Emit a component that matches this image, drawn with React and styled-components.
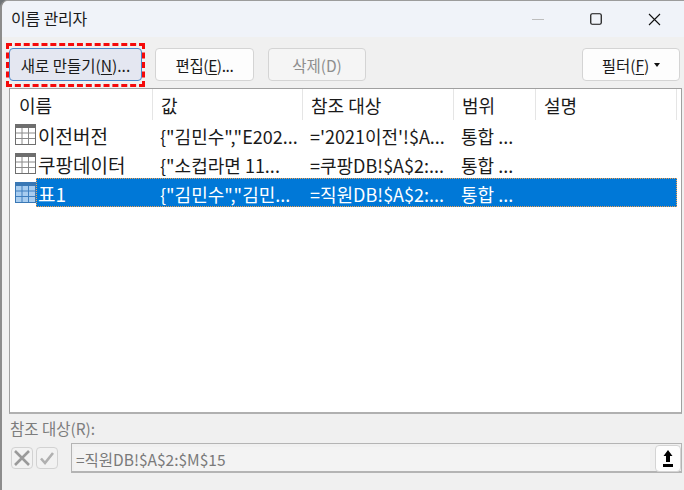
import React from 'react';
import styled, { createGlobalStyle } from 'styled-components';

const FONT = '"Noto Sans CJK KR", "Noto Sans", sans-serif';

const Global = createGlobalStyle`
  html, body { margin: 0; padding: 0; background: #6f7478; }
  #root { width: 684px; height: 490px; overflow: hidden; }
  * { box-sizing: border-box; }
`;

const Win = styled.div`
  width: 684px;
  height: 490px;
  display: flex;
  flex-direction: column;
  background: #f0f0f0;
  border-top: 1px solid #9c9c9c;
  border-left: 2px solid #8c8c8c;
  border-top-left-radius: 8px;
  font-family: ${FONT};
  color: #1a1a1a;
  overflow: hidden;
`;

const TitleBar = styled.div`
  height: 36px;
  flex: none;
  display: flex;
  align-items: center;
  background: #f0f3f9;
  padding-left: 9px;
  font-size: 16px;
  letter-spacing: -0.2px;
`;

const Title = styled.div`
  flex: 1;
  margin-top: -2px;
`;

const WinBtn = styled.div`
  width: 58.5px;
  height: 36px;
  display: flex;
  align-items: center;
  justify-content: center;
`;

const Toolbar = styled.div`
  height: 51px;
  flex: none;
  display: flex;
  align-items: flex-start;
  padding: 11px 2px 0 7px;
`;

const Button = styled.div`
  position: relative;
  width: ${(p) => p.$w}px;
  height: 33px;
  margin-left: ${(p) => p.$ml || 0}px;
  display: flex;
  align-items: center;
  justify-content: center;
  white-space: nowrap;
  font-size: 15.5px;
  letter-spacing: ${(p) => p.$ls || 0}px;
  background: ${(p) => (p.$primary ? '#e4e7f1' : p.$disabled ? '#f5f5f5' : '#fdfdfd')};
  color: ${(p) => (p.$disabled ? '#8e8e8e' : '#1a1a1a')};
  border: 1px solid ${(p) => (p.$primary ? '#4a86c8' : '#d4d4d4')};
  border-radius: 4px;
`;

const Highlight = styled.div`
  position: absolute;
  inset: -6px -4px -7px -4px;
  border: 3px dashed #f50a0a;
  pointer-events: none;
`;

const Key = styled.span`
  text-decoration: underline;
  text-underline-offset: 2px;
  text-decoration-thickness: 1px;
`;

const Caret = styled.span`
  width: 0;
  height: 0;
  margin-left: 5px;
  border-left: 3.5px solid transparent;
  border-right: 3.5px solid transparent;
  border-top: 4px solid #111;
`;

const List = styled.div`
  flex: none;
  height: 326px;
  margin: 0 2px 0 7px;
  background: #fff;
  border: 1px solid #a0a0a0;
  border-bottom: 2px solid #b0b0b0;
`;

const Columns = styled.div`
  display: grid;
  grid-template-columns: 143px 150px 151px 82px 141px;
`;

const Head = styled(Columns)`
  height: 31px;
  align-items: center;
  font-size: 18px;
`;

const HeadCell = styled.div`
  height: 31px;
  line-height: 33px;
  padding-left: ${(p) => p.$pl || 8}px;
  border-right: 1px solid #e5e5e5;
`;

const Row = styled.div`
  display: flex;
  height: 29px;
  align-items: center;
  padding-left: 5px;
`;

const TableIcon = styled.svg`
  width: 21px;
  height: 21px;
  flex: none;
`;

const RowBody = styled(Columns)`
  width: 641px;
  height: 29px;
  padding-top: 2px;
  grid-template-columns: 116px 150px 151px 82px 142px;
  align-items: center;
  white-space: nowrap;
  background: ${(p) => (p.$selected ? '#0078d7' : 'transparent')};
  color: ${(p) => (p.$selected ? '#fff' : '#1a1a1a')};
  outline: ${(p) => (p.$selected ? '1px dotted #f0a050' : 'none')};
  outline-offset: -1px;
`;

const Cell = styled.div`
  padding-left: ${(p) => p.$pl || 8}px;
  font-size: ${(p) => p.$size || 18}px;
  overflow: hidden;
`;

const RefLabel = styled.div`
  margin: 2px 0 0 8px;
  height: 24px;
  line-height: 24px;
  font-size: 15.5px;
  color: #7d7d7d;
`;

const RefRow = styled.div`
  display: flex;
  align-items: center;
  height: 30px;
  margin: 3px 2px 0 9px;
`;

const SmallBtn = styled.div`
  width: 22px;
  height: 22px;
  margin-right: 3px;
  display: flex;
  align-items: center;
  justify-content: center;
  background: #f2f2f2;
  border: 1px solid #d2d2d2;
  border-radius: 4px;
`;

const RefBox = styled.div`
  flex: 1;
  height: 30px;
  margin-left: 10px;
  display: flex;
  align-items: center;
  justify-content: space-between;
  background: #f0f0f0;
  border: 1px solid #b4b4b4;
  border-bottom-width: 2px;
  padding: 2px 0 0 2px;
`;

const RefValue = styled.div`
  flex: 1;
  height: 24px;
  line-height: 24px;
  padding-left: 2px;
  background: #f3f3f3;
  font-size: 15.5px;
  color: #7a7a7a;
  margin-right: 5px;
`;

const Collapse = styled.div`
  width: 26px;
  height: 27px;
  display: flex;
  align-items: center;
  justify-content: center;
  background: #fdfdfd;
  border: 1px solid #d4d4d4;
  border-radius: 4px;
`;

const rows = [
  { name: '이전버전', value: '{"김민수","E202...', ref: "='2021이전'!$A...", scope: '통합 ...' },
  { name: '쿠팡데이터', value: '{"소컵라면 11...', ref: '=쿠팡DB!$A$2:...', scope: '통합 ...' },
  { name: '표1', value: '{"김민수","김민...', ref: '=직원DB!$A$2:...', scope: '통합 ...', selected: true },
];

const GridIcon = ({ selected }) => {
  const line = selected ? '#3f7fbf' : '#8a8a8a';
  const head = selected ? '#3a78b5' : '#6e6e6e';
  const fill = selected ? '#a8cdf0' : '#fff';
  return (
    <TableIcon viewBox="0 0 21 21">
      <rect x="0.5" y="0.5" width="20" height="20" fill={fill} stroke={head} />
      <rect x="1" y="1" width="19" height="3" fill={head} />
      <path d="M7 4v16M13.5 4v16M1 9h19M1 14.5h19" stroke={line} strokeWidth="1" fill="none" />
    </TableIcon>
  );
};

export default function App() {
  return (
    <>
      <Global />
      <Win>
        <TitleBar>
          <Title>이름 관리자</Title>
          <WinBtn>
            <svg width="12" height="12" viewBox="0 0 12 12"><path d="M0 6.5h12" stroke="#bdbdbd" /></svg>
          </WinBtn>
          <WinBtn>
            <svg width="12" height="12" viewBox="0 0 12 12"><rect x="0.75" y="0.75" width="10.5" height="10.5" rx="1.5" fill="none" stroke="#111" strokeWidth="1.2" /></svg>
          </WinBtn>
          <WinBtn>
            <svg width="13" height="13" viewBox="0 0 13 13"><path d="M1 1l11 11M12 1L1 12" stroke="#111" strokeWidth="1.1" /></svg>
          </WinBtn>
        </TitleBar>

        <Toolbar>
          <Button $w={133} $primary>
            새로 만들기(<Key>N</Key>)...
            <Highlight />
          </Button>
          <Button $w={99} $ml={13} $ls={-0.4}>편집(<Key>E</Key>)...</Button>
          <Button $w={98} $ml={14} $disabled>삭제(D)</Button>
          <Button $w={98} $ml={216}>필터(<Key>F</Key>)<Caret /></Button>
        </Toolbar>

        <List>
          <Head>
            <HeadCell $pl={9}>이름</HeadCell>
            <HeadCell>값</HeadCell>
            <HeadCell>참조 대상</HeadCell>
            <HeadCell>범위</HeadCell>
            <HeadCell>설명</HeadCell>
          </Head>
          {rows.map((r) => (
            <Row key={r.name}>
              <GridIcon selected={r.selected} />
              <RowBody $selected={r.selected}>
                <Cell $pl={2} $size={19}>{r.name}</Cell>
                <Cell>{r.value}</Cell>
                <Cell>{r.ref}</Cell>
                <Cell>{r.scope}</Cell>
                <Cell />
              </RowBody>
            </Row>
          ))}
        </List>

        <RefLabel>참조 대상(R):</RefLabel>
        <RefRow>
          <SmallBtn>
            <svg width="18" height="18" viewBox="0 0 18 18"><path d="M2 2l14 14M16 2L2 16" stroke="#9a9a9a" strokeWidth="2.6" /></svg>
          </SmallBtn>
          <SmallBtn>
            <svg width="16" height="16" viewBox="0 0 16 16"><path d="M2 8.5l4 4.5 8-10" stroke="#b0b0b0" strokeWidth="2.6" fill="none" /></svg>
          </SmallBtn>
          <RefBox>
            <RefValue>=직원DB!$A$2:$M$15</RefValue>
            <Collapse>
              <svg width="12" height="18" viewBox="0 0 12 18"><path d="M6 0l4.5 6H8v6H4V6H1.500z" fill="#000" /><rect x="1" y="14" width="10" height="3" fill="#000" /></svg>
            </Collapse>
          </RefBox>
        </RefRow>
      </Win>
    </>
  );
}
